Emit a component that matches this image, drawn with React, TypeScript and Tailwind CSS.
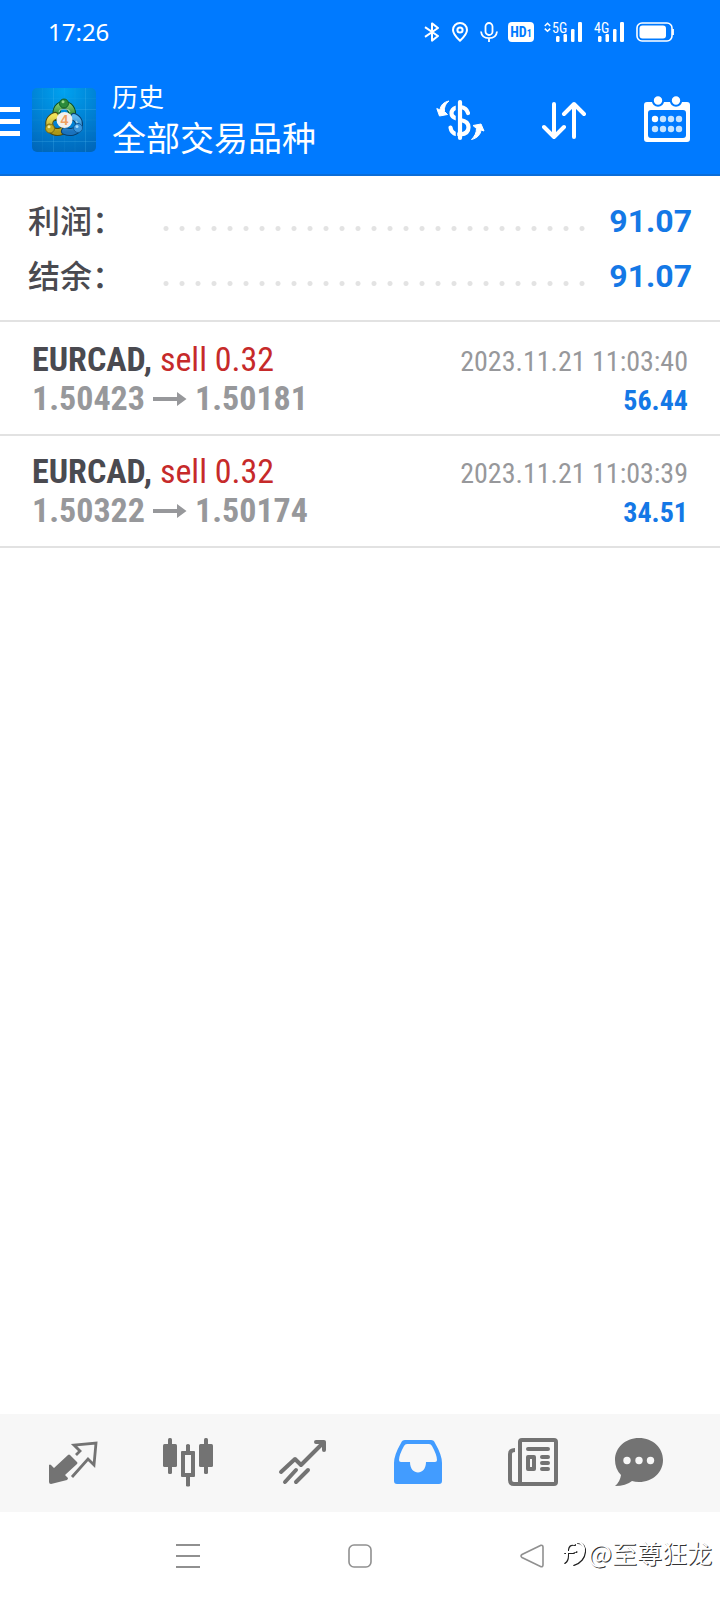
import type { ReactNode } from "react";

interface Deal {
  id: number;
  symbol: string;
  side: string;
  open: string;
  close: string;
  time: string;
  profit: string;
}

interface Tab {
  name: string;
  active?: boolean;
  icon: ReactNode;
}

const summary = [
  { label: "利润：", value: "91.07" },
  { label: "结余：", value: "91.07" },
];

const deals: Deal[] = [
  { id: 1, symbol: "EURCAD,", side: "sell 0.32", open: "1.50423", close: "1.50181", time: "2023.11.21 11:03:40", profit: "56.44" },
  { id: 2, symbol: "EURCAD,", side: "sell 0.32", open: "1.50322", close: "1.50174", time: "2023.11.21 11:03:39", profit: "34.51" },
];

const StatusBar = () => (
  <div className="flex h-16 items-center justify-between pl-12 pr-[46px] text-white">
    <span className="font-['Noto_Sans',sans-serif] text-2xl">17:26</span>
    <div className="flex items-center">
      <svg width="16" height="20" viewBox="0 0 16 20" fill="none" stroke="currentColor" strokeWidth="2" className="mr-3">
        <path d="M1 5.2 14 14 8 18.6V1.4L14 6 1 14.8" strokeLinejoin="round" />
      </svg>
      <svg width="16" height="20" viewBox="0 0 16 20" fill="none" stroke="currentColor" strokeWidth="2" className="mr-3">
        <path d="M8 18.8C4.500 15.500 1 12 1 8a7 7 0 0 1 14 0c0 4-3.500 7.500-7 10.800Z" strokeLinejoin="round" />
        <circle cx="8" cy="8" r="2.600" />
      </svg>
      <svg width="18" height="20" viewBox="0 0 18 20" fill="none" stroke="currentColor" strokeWidth="1.800" className="mr-2.5">
        <rect x="5.500" y="1" width="7" height="12" rx="3.500" />
        <path d="M1 9.500c.5 4.500 4 6.700 8 6.700s7.500-2.200 8-6.700M9 16v4" />
      </svg>
      <span className="mr-2.5 flex h-5 w-[26px] items-center justify-center rounded bg-white font-['Roboto_Condensed','Liberation_Sans_Narrow',sans-serif] text-sm font-bold text-[#007aff]">
        HD<span className="pt-1 text-[10px]">1</span>
      </span>
      <svg width="38" height="32" viewBox="0 -6 38 32" fill="currentColor" className="mr-3">
        <path d="m.8 4 2.700-2.700L6.200 4M.8 6.600l2.700 2.700 2.700-2.700" fill="none" stroke="currentColor" strokeWidth="1.500" />
        <text x="8" y="11" fontSize="14" fontFamily="'Roboto Condensed', 'Liberation Sans Narrow', sans-serif">5G</text>
        <rect x="12" y="14" width="3.500" height="6" rx="1.200" />
        <rect x="19.500" y="12" width="3.500" height="8" rx="1.200" />
        <rect x="27" y="7" width="3.500" height="13" rx="1.200" />
        <rect x="34" y="0" width="4" height="20" rx="1.200" />
      </svg>
      <svg width="30" height="32" viewBox="0 -6 30 32" fill="currentColor" className="mr-3">
        <text x="0" y="11" fontSize="14" fontFamily="'Roboto Condensed', 'Liberation Sans Narrow', sans-serif">4G</text>
        <rect x="4" y="14" width="3.500" height="6" rx="1.200" />
        <rect x="11.500" y="12" width="3.500" height="8" rx="1.200" />
        <rect x="19" y="7" width="3.500" height="13" rx="1.200" />
        <rect x="26" y="0" width="4" height="20" rx="1.200" />
      </svg>
      <svg width="38" height="20" viewBox="0 0 38 20" fill="none">
        <rect x="1" y="1" width="35" height="18" rx="5" stroke="currentColor" strokeWidth="1.600" />
        <rect x="3.500" y="3.500" width="26.500" height="13" rx="3" fill="currentColor" />
        <path d="M37 7v6" stroke="currentColor" strokeWidth="1.800" />
      </svg>
    </div>
  </div>
);

const Logo = () => (
  <svg width="64" height="64" viewBox="0 0 64 64" className="shrink-0">
    <defs>
      <radialGradient id="tile" cx="50%" cy="5%" r="105%">
        <stop offset="0" stopColor="#00a2f0" />
        <stop offset="0.550" stopColor="#007fd2" />
        <stop offset="1" stopColor="#0065b8" />
      </radialGradient>
      <linearGradient id="green" x1="0" y1="0" x2="0" y2="1">
        <stop offset="0" stopColor="#7cc46a" />
        <stop offset="1" stopColor="#1f7a2c" />
      </linearGradient>
      <linearGradient id="yellow" x1="0" y1="0" x2="0" y2="1">
        <stop offset="0" stopColor="#efe25a" />
        <stop offset="1" stopColor="#ab9718" />
      </linearGradient>
      <linearGradient id="blue" x1="0" y1="0" x2="0" y2="1">
        <stop offset="0" stopColor="#5ab5ee" />
        <stop offset="1" stopColor="#1a72bd" />
      </linearGradient>
    </defs>
    <rect width="64" height="64" rx="5" fill="url(#tile)" />
    <path d="M21.500 0v64M53.500 0v64M0 21.500h64M0 53.500h64" stroke="#5cc4f5" strokeOpacity=".22" />
    <path d="M10.500 0v64M32.500 0v64M43 0v64M0 10.500h64M0 32h64M0 43h64" stroke="#5cc4f5" strokeOpacity=".07" />
    <g strokeLinecap="round" fill="none">
      <path d="M25 29c-2-8 2-12 7-12s9 4 8 12" stroke="#0b4e22" strokeWidth="8" />
      <path d="M25 29c-2-8 2-12 7-12s9 4 8 12" stroke="url(#green)" strokeWidth="6" />
      <path d="M23 28c-5 2-7 6-5 11s7 6 12 4" stroke="#4c4a12" strokeWidth="8" />
      <path d="M23 28c-5 2-7 6-5 11s7 6 12 4" stroke="url(#yellow)" strokeWidth="6" />
      <path d="M42 29c5 2 6 7 4 11s-8 5-13 3" stroke="#08406f" strokeWidth="8" />
      <path d="M42 29c5 2 6 7 4 11s-8 5-13 3" stroke="url(#blue)" strokeWidth="6" />
    </g>
    <path d="M27 24c1-4 9-4 11 0M19 35c-1 2 0 4 2 4M44 33c2 2 2 4 0 6" fill="none" stroke="#e8f6e0" strokeOpacity=".6" strokeWidth="1.200" />
    <circle cx="32" cy="15.500" r="4.500" fill="#2b8a3b" stroke="#12602a" />
    <circle cx="18" cy="40.500" r="4.500" fill="#c0aa25" stroke="#736713" />
    <circle cx="46" cy="40" r="4.500" fill="#3a95dc" stroke="#0f5b9c" />
    <circle cx="31" cy="13.800" r="1.500" fill="#9ad98c" />
    <circle cx="17" cy="38.800" r="1.500" fill="#f4ec96" />
    <circle cx="45" cy="38.500" r="1.500" fill="#a8dbfa" />
    <circle cx="32.500" cy="32" r="8" fill="#f2f0ee" />
    <text x="32.500" y="37" textAnchor="middle" fontSize="14" fontWeight="700" fontFamily="'Liberation Sans', sans-serif" fill="#f0a060">4</text>
  </svg>
);

const Header = () => (
  <header className="border-b-2 border-[#0b6dd8] bg-[#007aff] text-white">
    <StatusBar />
    <div className="flex h-[110px] items-center pr-[30px] pt-0.5">
      <button aria-label="菜单" className="mr-3 flex w-5 flex-col gap-[7px] pt-0.5">
        <span className="h-[5px] w-full bg-white" />
        <span className="h-[5px] w-full bg-white" />
        <span className="h-[5px] w-full bg-white" />
      </button>
      <Logo />
      <div className="ml-4 flex flex-1 flex-col pb-0.5 font-['Noto_Sans_CJK_SC',sans-serif]">
        <span className="text-[26px] leading-9">历史</span>
        <h1 className="text-[34px] leading-[46px]">全部交易品种</h1>
      </div>
      <div className="flex items-center">
        <button aria-label="货币" className="mr-14">
          <svg width="50" height="48" viewBox="0 0 50 48" fill="none" stroke="currentColor">
            <path d="M20.500 11.500c-3 1-5 3-5 5.800 0 2.500 1.700 4.200 5 5.200" strokeWidth="4.200" />
            <path d="M14.500 31.500c.5 3.500 2.500 6 6 6.700" strokeWidth="4.200" strokeLinecap="round" />
            <path d="M24.500 11c4 .3 6.500 2.500 7.500 6M24.500 24c5 .8 8 3 8 7.200s-3 6.800-8 7.100" strokeWidth="4.200" strokeLinecap="round" />
            <path d="M20.500 8v34" stroke="#007aff" strokeWidth="1.500" />
            <path d="M24 6v36" strokeWidth="4.200" strokeLinecap="round" />
            <path d="M13 5C8 6 4.500 9 4 14L.8 12.500 3.500 20 11.500 18.500 8.500 15.500C8 11 9.500 8 13 5Z" fill="currentColor" strokeWidth="1" strokeLinejoin="round" />
            <path d="M35.500 43.500c6-1.500 9-5 9.500-9.500l3 1L45 28l-8 1.500 3.500 3c0 4.500-2 8-5 11Z" fill="currentColor" strokeWidth="1" strokeLinejoin="round" />
          </svg>
        </button>
        <button aria-label="排序" className="mr-14">
          <svg width="46" height="48" viewBox="0 0 46 48" fill="none" stroke="currentColor" strokeWidth="4" strokeLinecap="round" strokeLinejoin="round">
            <path d="M12 8v33M2 31l10 10 10-10M32 41V8M22 18 32 8l10 10" />
          </svg>
        </button>
        <button aria-label="日期">
          <svg width="46" height="48" viewBox="0 0 46 48" fill="none">
            <path fillRule="evenodd" fill="currentColor" d="M3 6h40a3 3 0 0 1 3 3v34a3 3 0 0 1-3 3H3a3 3 0 0 1-3-3V9a3 3 0 0 1 3-3Zm4 8a3 3 0 0 0-3 3v22a3 3 0 0 0 3 3h32a3 3 0 0 0 3-3V17a3 3 0 0 0-3-3Z" />
            <g fill="currentColor" stroke="#007aff" strokeWidth="2">
              <circle cx="14" cy="4.500" r="5.200" />
              <circle cx="32" cy="4.500" r="5.200" />
            </g>
            <circle cx="11" cy="23" r="3.200" fill="#fff" />
            <g fill="#c5e3ff">
              <circle cx="19" cy="23" r="3.200" />
              <circle cx="27" cy="23" r="3.200" />
              <circle cx="35" cy="23" r="3.200" />
              <circle cx="11" cy="33" r="3.200" />
              <circle cx="19" cy="33" r="3.200" />
              <circle cx="27" cy="33" r="3.200" />
              <circle cx="35" cy="33" r="3.200" />
            </g>
          </svg>
        </button>
      </div>
    </div>
  </header>
);

const DealRow = ({ deal }: { deal: Deal }) => (
  <li className="border-b-2 border-[#e2e2e2] py-4 px-8 font-['Roboto_Condensed','Liberation_Sans_Narrow',sans-serif]">
    <div className="flex items-baseline justify-between">
      <span className="text-[34px] leading-[39px] text-[#c62a2a]">
        <b className="font-bold text-[#4a4a50]">{deal.symbol}</b> {deal.side}
      </span>
      <span className="text-[28px] leading-8 text-[#97989b]">{deal.time}</span>
    </div>
    <div className="flex items-baseline justify-between font-bold">
      <span className="flex items-center gap-2 text-[34px] leading-[39px] text-[#97989b]">
        {deal.open}
        <svg width="34" height="14" viewBox="0 0 34 14" fill="currentColor">
          <path d="M0 5h24V0l9.500 7L24 14V9H0Z" />
        </svg>
        {deal.close}
      </span>
      <span className="text-[28px] leading-8 text-[#1478e6]">{deal.profit}</span>
    </div>
  </li>
);

const tabs: Tab[] = [
  {
    name: "行情",
    icon: (
      <>
        <path d="M1 27q1-1 2 0l3 3L20 17q1-1 2 0l7 7q1 1 0 2L17 37l3 3q0 1-1 2L3 46q-2 0-2-2Z" fill="currentColor" />
        <path d="m28 17 4-4-6-6 22-2-2 22-6-6-16 18" fill="none" stroke="currentColor" strokeWidth="2.800" />
      </>
    ),
  },
  {
    name: "图表",
    icon: (
      <g fill="currentColor">
        <rect x="0" y="6" width="14" height="23" rx="1.500" />
        <rect x="5" y="0" width="4" height="36" rx="1.500" />
        <rect x="36" y="6" width="14" height="23" rx="1.500" />
        <rect x="41" y="0" width="4" height="36" rx="1.500" />
        <path d="M23 7q2-2 4 0v6h4q1 0 1 1v24q0 1-1 1h-4v9q-2 1-4 0v-9h-4q-1 0-1-1V14q0-1 1-1h4Zm-1 10v18h6V17Z" fillRule="evenodd" />
      </g>
    ),
  },
  {
    name: "交易",
    icon: (
      <g fill="none" stroke="currentColor" strokeWidth="4" strokeLinecap="round" strokeLinejoin="round">
        <path d="m3 34 14-13 6 6L46 4M38 4h8v8M7 44l11-12M18 44l12-12" />
      </g>
    ),
  },
  {
    name: "历史",
    active: true,
    icon: (
      <path
        fillRule="evenodd"
        fill="currentColor"
        d="M12 2h26q3 0 4 3 7 12 7 20v18q0 3-3 3H4q-3 0-3-3V25Q1 17 8 5q1-3 4-3Zm2 4q-2 0-3 2Q6 17 6 22q0 2 2 2h9c0 14 16 14 16 0h9q2 0 2-2 0-5-5-14-1-2-3-2Z"
      />
    ),
  },
  {
    name: "新闻",
    icon: (
      <g fill="none" stroke="currentColor" strokeWidth="4" strokeLinejoin="round">
        <rect x="12" y="2" width="36" height="44" rx="2" />
        <path d="M7 12q-5 0-5 4v26q0 4 4 4h8" />
        <path d="M20 11h20M34 19h6M34 25h6M34 31h6" strokeLinecap="round" />
        <rect x="20" y="19" width="6" height="12" />
      </g>
    ),
  },
  {
    name: "聊天",
    icon: (
      <>
        <path d="M25 0c14 0 24 10 24 22S39 44 25 44q-4 0-7-1-6 5-17 5 5-4 6-11Q1 31 1 22C1 10 11 0 25 0Z" fill="currentColor" />
        <g fill="#f7f7f7">
          <circle cx="13" cy="22.500" r="3.700" />
          <circle cx="25" cy="22.500" r="3.700" />
          <circle cx="36.500" cy="22.500" r="3.700" />
        </g>
      </>
    ),
  },
];

const TabButton = ({ tab }: { tab: Tab }) => (
  <button aria-label={tab.name} className={tab.active ? "text-[#429cff]" : "text-[#737373]"}>
    <svg width="50" height="50" viewBox="0 0 50 50">
      {tab.icon}
    </svg>
  </button>
);

const TabBar = () => (
  <nav className="flex h-[98px] items-center gap-14 bg-[#f7f7f7] pl-12 pr-14">
    <div className="flex flex-1 justify-between">
      {tabs.slice(0, 5).map((tab) => (
        <TabButton key={tab.name} tab={tab} />
      ))}
    </div>
    <TabButton tab={tabs[5]} />
  </nav>
);

const SystemNav = () => (
  <div className="relative flex h-[88px] items-center justify-center gap-[148px] text-[#909090]">
    <button aria-label="最近任务">
      <svg width="24" height="24" viewBox="0 0 24 24" stroke="currentColor" strokeWidth="2">
        <path d="M0 1h24M0 12h24M0 23h24" />
      </svg>
    </button>
    <button aria-label="主页">
      <svg width="24" height="24" viewBox="0 0 24 24" fill="none" stroke="currentColor" strokeWidth="1.600">
        <rect x="1" y="1" width="22" height="22" rx="5" />
      </svg>
    </button>
    <button aria-label="返回">
      <svg width="24" height="24" viewBox="0 0 24 24" fill="none" stroke="currentColor" strokeWidth="1.600">
        <path d="M21 1.300 2 10.500q-2 1.500 0 3L21 22.700q2 .3 2-2V3.300q0-2.300-2-2Z" />
      </svg>
    </button>
    {/* watermark */}
    <div className="absolute right-2 top-[22px] flex items-center text-white [text-shadow:1px_1px_0_#333]">
      <svg width="26" height="30" viewBox="0 0 26 30" fill="none" strokeLinecap="round" strokeWidth="2">
        <path d="M2 25q3-2 3-7V12q1-6 7-5M2 15h9M15 5c10 0 10 18-4 22M13 14h.500" stroke="#222" transform="translate(1 1)" />
        <path d="M2 25q3-2 3-7V12q1-6 7-5M2 15h9M15 5c10 0 10 18-4 22M13 14h.500" stroke="#fff" />
      </svg>
      <span className="font-['Noto_Sans_CJK_SC',sans-serif] text-[25px] leading-9">@至尊狂龙</span>
    </div>
  </div>
);

export default function App() {
  return (
    <div className="flex min-h-screen flex-col bg-white">
      <Header />
      <main className="flex-1">
        <dl className="border-b-2 border-[#e2e2e2] px-7 pb-[18px] pt-4">
          {summary.map((row) => (
            <div key={row.label} className="flex h-[55px] items-center">
              <dt className="w-[130px] font-['Noto_Sans_CJK_SC',sans-serif] text-[32px] font-medium leading-[55px] text-[#4a4a50]">
                {row.label}
              </dt>
              <div className="mt-[18px] h-[5px] flex-1 bg-[radial-gradient(circle,#e3e3e3_2px,transparent_3px)] bg-[length:16px_5px] bg-repeat-x" />
              <dd className="ml-5 pt-0.5 font-[Roboto,sans-serif] text-[32px] font-bold text-[#1478e6]">{row.value}</dd>
            </div>
          ))}
        </dl>
        <ul className="pt-0.5">
          {deals.map((deal) => (
            <DealRow key={deal.id} deal={deal} />
          ))}
        </ul>
      </main>
      <TabBar />
      <SystemNav />
    </div>
  );
}
